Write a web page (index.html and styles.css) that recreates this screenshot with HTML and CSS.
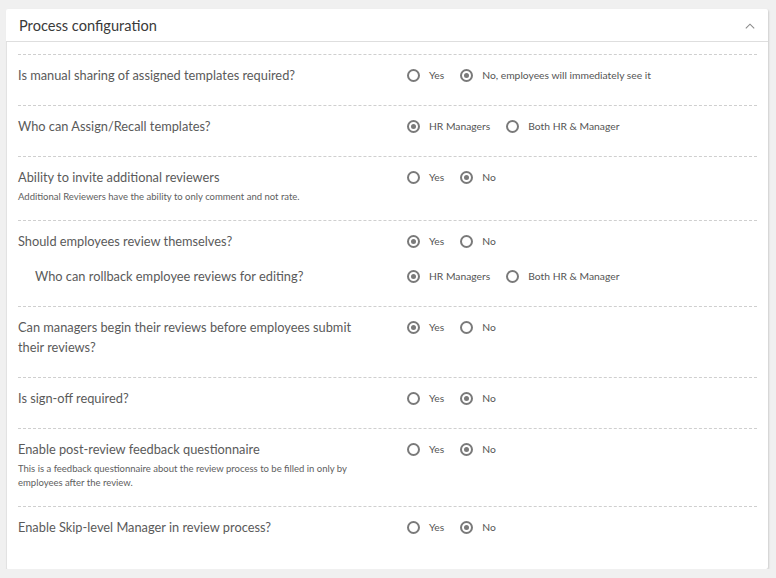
FILE: index.html
```html
<!DOCTYPE html>
<html lang="en">
<head>
<meta charset="utf-8">
<title>Process configuration</title>
<link rel="stylesheet" href="styles.css">
</head>
<body>
<section class="card">
  <header class="card-header">
    <h2 class="card-title">Process configuration</h2>
    <svg class="chevron" width="10" height="6" viewBox="0 0 10 6"><path d="M0.8 5.4 L5 1.2 L9.2 5.4" fill="none" stroke="#8a8a8a" stroke-width="1.1"/></svg>
  </header>
  <div class="card-body">
    <div class="row">
      <div class="line">
        <div class="q"><div class="q-title">Is manual sharing of assigned templates required?</div></div>
        <div class="opts">
          <label class="opt"><span class="radio"></span>Yes</label>
          <label class="opt"><span class="radio checked"></span>No, employees will immediately see it</label>
        </div>
      </div>
    </div>
    <div class="row">
      <div class="line">
        <div class="q"><div class="q-title">Who can Assign/Recall templates?</div></div>
        <div class="opts">
          <label class="opt"><span class="radio checked"></span>HR Managers</label>
          <label class="opt"><span class="radio"></span>Both HR &amp; Manager</label>
        </div>
      </div>
    </div>
    <div class="row">
      <div class="line">
        <div class="q">
          <div class="q-title">Ability to invite additional reviewers</div>
          <div class="q-sub">Additional Reviewers have the ability to only comment and not rate.</div>
        </div>
        <div class="opts">
          <label class="opt"><span class="radio"></span>Yes</label>
          <label class="opt"><span class="radio checked"></span>No</label>
        </div>
      </div>
    </div>
    <div class="row">
      <div class="line">
        <div class="q"><div class="q-title">Should employees review themselves?</div></div>
        <div class="opts">
          <label class="opt"><span class="radio checked"></span>Yes</label>
          <label class="opt"><span class="radio"></span>No</label>
        </div>
      </div>
      <div class="line nested">
        <div class="q"><div class="q-title">Who can rollback employee reviews for editing?</div></div>
        <div class="opts">
          <label class="opt"><span class="radio checked"></span>HR Managers</label>
          <label class="opt"><span class="radio"></span>Both HR &amp; Manager</label>
        </div>
      </div>
    </div>
    <div class="row">
      <div class="line">
        <div class="q"><div class="q-title">Can managers begin their reviews before employees submit their reviews?</div></div>
        <div class="opts">
          <label class="opt"><span class="radio checked"></span>Yes</label>
          <label class="opt"><span class="radio"></span>No</label>
        </div>
      </div>
    </div>
    <div class="row">
      <div class="line">
        <div class="q"><div class="q-title">Is sign-off required?</div></div>
        <div class="opts">
          <label class="opt"><span class="radio"></span>Yes</label>
          <label class="opt"><span class="radio checked"></span>No</label>
        </div>
      </div>
    </div>
    <div class="row">
      <div class="line">
        <div class="q">
          <div class="q-title">Enable post-review feedback questionnaire</div>
          <div class="q-sub">This is a feedback questionnaire about the review process to be filled in only by employees after the review.</div>
        </div>
        <div class="opts">
          <label class="opt"><span class="radio"></span>Yes</label>
          <label class="opt"><span class="radio checked"></span>No</label>
        </div>
      </div>
    </div>
    <div class="row">
      <div class="line">
        <div class="q"><div class="q-title">Enable Skip-level Manager in review process?</div></div>
        <div class="opts">
          <label class="opt"><span class="radio"></span>Yes</label>
          <label class="opt"><span class="radio checked"></span>No</label>
        </div>
      </div>
    </div>
  </div>
</section>
</body>
</html>
```
FILE: styles.css
```css
html, body {
  margin: 0;
  padding: 0;
}
body {
  background: #f0f0f0;
  font-family: Lato, "Open Sans", sans-serif;
  color: #595959;
  padding: 9px 8px 0 6px;
}
.card {
  background: #fff;
  border-radius: 2px;
  box-shadow: 1px 1px 2px rgba(0, 0, 0, 0.14);
}
.card-header {
  height: 32px;
  display: flex;
  align-items: center;
  justify-content: space-between;
  padding: 0 13px 0 13px;
  border-bottom: 1px solid #dedede;
}
.card-title {
  margin: 0;
  font-size: 14.6px;
  font-weight: 400;
  color: #3a3a3a;
}
.chevron {
  display: block;
  margin-top: 1px;
}
.card-body {
  border-left: 1px solid #e2e2e2;
  padding: 12px 11px 12px 11px;
}
.row {
  border-top: 1px dashed #cfcfcf;
  padding: 10px 0 20px;
  display: flex;
  flex-direction: column;
  gap: 15px;
}
.line {
  display: grid;
  grid-template-columns: 389px 1fr;
}
.nested .q {
  padding-left: 17px;
}
.q {
  padding-right: 40px;
}
.q-title {
  font-size: 12.8px;
  line-height: 20px;
  color: #5a5a5a;
}
.q-sub {
  font-size: 9.5px;
  line-height: 14px;
  color: #606060;
  margin: 3px 0 -4px;
}
.opts {
  display: flex;
  align-items: center;
  height: 20px;
}
.opt {
  display: flex;
  align-items: center;
  font-size: 10.3px;
  color: #555;
  margin-right: 16px;
}
.radio {
  width: 13px;
  height: 13px;
  box-sizing: border-box;
  border: 2px solid #7a7a7a;
  border-radius: 50%;
  margin-right: 9px;
  position: relative;
}
.radio.checked::after {
  content: "";
  position: absolute;
  left: 2px;
  top: 2px;
  width: 5px;
  height: 5px;
  border-radius: 50%;
  background: #7a7a7a;
}
```
